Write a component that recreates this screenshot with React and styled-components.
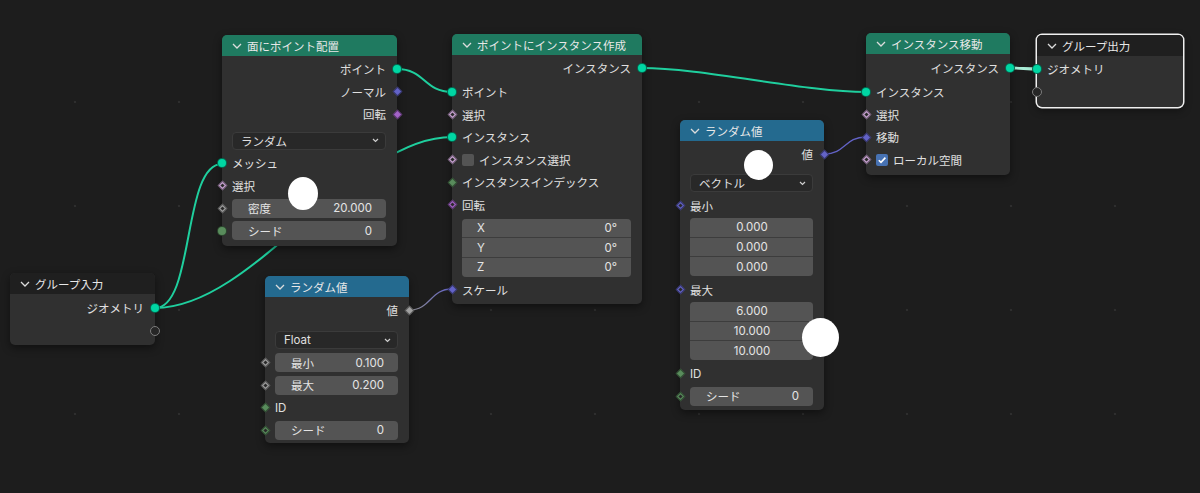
import React from 'react';
import styled, { createGlobalStyle, css } from 'styled-components';

const GlobalStyle = createGlobalStyle`
  body {
    margin: 0;
    background: #1d1d1d;
    font-family: Inter, "Noto Sans CJK JP", "Noto Sans", sans-serif;
  }
`;

const Canvas = styled.div`
  position: relative;
  width: 1200px;
  height: 493px;
  overflow: hidden;
  background-color: #1d1d1d;
  background-image: radial-gradient(circle, #2e2e2e 1px, transparent 1.6px);
  background-size: 104px 104px;
  background-position: 23px 50px;
`;

const Wires = styled.svg`
  position: absolute;
  left: 0;
  top: 0;
`;

const Node = styled.div`
  position: absolute;
  left: ${p => p.$x}px;
  top: ${p => p.$y}px;
  width: ${p => p.$w}px;
  background: #303030;
  border-radius: 5px;
  box-shadow: 0 3px 8px rgba(0, 0, 0, 0.45);
  ${p => p.$selected && css`
    box-shadow: 0 0 0 1.5px #f0f0f0, 0 3px 8px rgba(0, 0, 0, 0.45);
  `}
`;

const Header = styled.div`
  height: 21px;
  display: flex;
  align-items: center;
  gap: 5px;
  padding-left: 10px;
  background: ${p => p.$color};
  border-radius: 5px 5px 0 0;
  color: #e8e8e8;
  font-size: 11.5px;
  white-space: nowrap;
`;

const Body = styled.div`
  display: flex;
  flex-direction: column;
  padding: ${p => p.$pt}px 0 ${p => p.$pb}px;
`;

const Row = styled.div`
  position: relative;
  height: 22.5px;
  flex: none;
  display: flex;
  align-items: center;
  justify-content: ${p => (p.$out ? 'flex-end' : 'flex-start')};
  padding: 0 11px 0 10px;
  margin-top: ${p => p.$mt || 0}px;
  color: #e0e0e0;
  font-size: 11.5px;
  white-space: nowrap;
`;

const Circle = styled.span`
  position: absolute;
  top: 50%;
  ${p => p.$side}: -5px;
  width: 10px;
  height: 10px;
  margin-top: -5px;
  box-sizing: border-box;
  border-radius: 50%;
  background: ${p => (p.$hollow ? '#262626' : p.$color)};
  border: 1px solid ${p => (p.$hollow ? '#7c7c7c' : 'rgba(0,0,0,0.5)')};
`;

const Diamond = styled.span`
  position: absolute;
  top: 50%;
  ${p => p.$side}: -3.5px;
  width: 7px;
  height: 7px;
  margin-top: -3.5px;
  box-sizing: border-box;
  transform: rotate(45deg);
  background: ${p => p.$color};
  border: 1px solid rgba(0, 0, 0, 0.45);
  &::after {
    content: '';
    display: ${p => (p.$dot ? 'block' : 'none')};
    position: absolute;
    left: 50%;
    top: 50%;
    width: 2.4px;
    height: 2.4px;
    margin: -1.2px 0 0 -1.2px;
    background: #2a2a2a;
  }
`;

const SOCKETS = {
  geo: { shape: 'circle', color: '#00d6a3' },
  hollow: { shape: 'circle', hollow: true },
  intc: { shape: 'circle', color: '#598c5c' },
  vec: { shape: 'diamond', color: '#6363c7' },
  vecf: { shape: 'diamond', color: '#6363c7', dot: true },
  rot: { shape: 'diamond', color: '#a363c7' },
  rotf: { shape: 'diamond', color: '#a363c7', dot: true },
  boolf: { shape: 'diamond', color: '#cca6d6', dot: true },
  float: { shape: 'diamond', color: '#a1a1a1' },
  floatf: { shape: 'diamond', color: '#a1a1a1', dot: true },
  int: { shape: 'diamond', color: '#598c5c' },
  intf: { shape: 'diamond', color: '#598c5c', dot: true },
};

const Sock = ({ k, side = 'left' }) => {
  const s = SOCKETS[k];
  return s.shape === 'circle'
    ? <Circle $side={side} $color={s.color} $hollow={s.hollow} />
    : <Diamond $side={side} $color={s.color} $dot={s.dot} />;
};

const Field = styled.div`
  flex: 1;
  height: 19px;
  display: flex;
  align-items: center;
  justify-content: space-between;
  padding: 0 14px 0 16px;
  background: #545454;
  border-radius: 4px;
  color: #e4e4e4;
`;

const Vector = styled.div`
  display: flex;
  flex-direction: column;
  gap: 1px;
  margin: ${p => p.$mt || 0}px 11px 0 10px;
  border-radius: 4px;
  overflow: hidden;
  background: #3d3d3d;
`;

const VecCell = styled.div`
  height: 18.7px;
  display: flex;
  align-items: center;
  justify-content: ${p => (p.$center ? 'center' : 'space-between')};
  padding: 0 14px 0 15px;
  background: #545454;
  color: #e4e4e4;
  font-size: 11.5px;
`;

const Select = styled.div`
  flex: 1;
  height: 18px;
  box-sizing: border-box;
  display: flex;
  align-items: center;
  justify-content: space-between;
  padding: 0 6px 0 8px;
  background: #282828;
  border: 1px solid #3b3b3b;
  border-radius: 4px;
  color: #e0e0e0;
`;

const Check = styled.span`
  width: 12px;
  height: 12px;
  margin-right: 5px;
  border-radius: 2px;
  display: flex;
  align-items: center;
  justify-content: center;
  background: ${p => (p.$on ? '#4772b3' : '#545454')};
`;

const Blob = styled.span`
  position: absolute;
  left: ${p => p.$x - p.$w / 2}px;
  top: ${p => p.$y - p.$h / 2}px;
  width: ${p => p.$w}px;
  height: ${p => p.$h}px;
  border-radius: 50%;
  background: #ffffff;
`;

const Chevron = () => (
  <svg width="10" height="10" viewBox="0 0 10 10">
    <polyline points="1,3 5,7 9,3" fill="none" stroke="#dcdcdc" strokeWidth="1.3" />
  </svg>
);

const SmallChevron = () => (
  <svg width="7" height="5" viewBox="0 0 7 5">
    <polyline points="1,1 3.5,3.5 6,1" fill="none" stroke="#cfcfcf" strokeWidth="1.2" />
  </svg>
);

const Tick = () => (
  <svg width="10" height="10" viewBox="0 0 10 10">
    <polyline points="1.8,5.2 4,7.4 8.4,2.6" fill="none" stroke="#fff" strokeWidth="1.6" />
  </svg>
);

const GREEN = '#1f7a60';
const BLUE = '#246a8f';
const DARK = '#1f1f1f';

const wire = (x1, y1, x2, y2, d) =>
  `M${x1} ${y1} C${x1 + d} ${y1}, ${x2 - d} ${y2}, ${x2} ${y2}`;

const LINKS = [
  { d: wire(155, 308, 222, 164, 40), c: '#1fcf9e', w: 2 },
  { d: wire(155, 308, 452, 137, 100), c: '#1fcf9e', w: 2 },
  { d: wire(397, 69, 452, 92, 28), c: '#1fcf9e', w: 2 },
  { d: wire(642, 68, 866, 92, 60), c: '#1fcf9e', w: 2 },
  { d: wire(409, 310, 452, 289, 22), c: 'url(#floatVec)', w: 1.3 },
  { d: wire(824, 154, 866, 137, 22), c: '#6363c7', w: 1.3 },
  { d: wire(1010, 68, 1037, 69, 10), c: '#a8ecd6', w: 2.8 },
];

export default function App() {
  return (
    <>
      <GlobalStyle />
      <Canvas>
        <Wires width="1200" height="493">
          <defs>
            <linearGradient id="floatVec" gradientUnits="userSpaceOnUse" x1="409" y1="0" x2="452" y2="0">
              <stop offset="0" stopColor="#8d8d8d" />
              <stop offset="1" stopColor="#6363c7" />
            </linearGradient>
          </defs>
          {LINKS.map((l, i) => (
            <path key={i} d={l.d} fill="none" stroke={l.c} strokeWidth={l.w} strokeLinecap="round" />
          ))}
        </Wires>

        <Node $x={10} $y={273} $w={145}>
          <Header $color={DARK}><Chevron />グループ入力</Header>
          <Body $pt={3} $pb={3}>
            <Row $out>ジオメトリ<Sock k="geo" side="right" /></Row>
            <Row $out><Sock k="hollow" side="right" /></Row>
          </Body>
        </Node>

        <Node $x={222} $y={35} $w={175}>
          <Header $color={GREEN}><Chevron />面にポイント配置</Header>
          <Body $pt={2} $pb={4}>
            <Row $out>ポイント<Sock k="geo" side="right" /></Row>
            <Row $out>ノーマル<Sock k="vec" side="right" /></Row>
            <Row $out>回転<Sock k="rot" side="right" /></Row>
            <Row $mt={4}><Select>ランダム<SmallChevron /></Select></Row>
            <Row><Sock k="geo" />メッシュ</Row>
            <Row><Sock k="boolf" />選択</Row>
            <Row><Sock k="floatf" /><Field><span>密度</span><span>20.000</span></Field></Row>
            <Row><Sock k="intc" /><Field><span>シード</span><span>0</span></Field></Row>
          </Body>
        </Node>

        <Node $x={452} $y={34} $w={190}>
          <Header $color={GREEN}><Chevron />ポイントにインスタンス作成</Header>
          <Body $pt={2} $pb={3}>
            <Row $out>インスタンス<Sock k="geo" side="right" /></Row>
            <Row $mt={1.5}><Sock k="geo" />ポイント</Row>
            <Row><Sock k="boolf" />選択</Row>
            <Row><Sock k="geo" />インスタンス</Row>
            <Row><Sock k="boolf" /><Check />インスタンス選択</Row>
            <Row><Sock k="int" />インスタンスインデックス</Row>
            <Row><Sock k="rotf" />回転</Row>
            <Vector $mt={2.5}>
              <VecCell><span>X</span><span>0°</span></VecCell>
              <VecCell><span>Y</span><span>0°</span></VecCell>
              <VecCell><span>Z</span><span>0°</span></VecCell>
            </Vector>
            <Row $mt={2}><Sock k="vec" />スケール</Row>
          </Body>
        </Node>

        <Node $x={265} $y={276} $w={144}>
          <Header $color={BLUE}><Chevron />ランダム値</Header>
          <Body $pt={2} $pb={1.5}>
            <Row $out>値<Sock k="float" side="right" /></Row>
            <Row $mt={7.5}><Select>Float<SmallChevron /></Select></Row>
            <Row><Sock k="floatf" /><Field><span>最小</span><span>0.100</span></Field></Row>
            <Row><Sock k="floatf" /><Field><span>最大</span><span>0.200</span></Field></Row>
            <Row><Sock k="int" />ID</Row>
            <Row><Sock k="intf" /><Field><span>シード</span><span>0</span></Field></Row>
          </Body>
        </Node>

        <Node $x={680} $y={120} $w={144}>
          <Header $color={BLUE}><Chevron />ランダム値</Header>
          <Body $pt={2} $pb={2.5}>
            <Row $out>値<Sock k="vec" side="right" /></Row>
            <Row $mt={6.5}><Select>ベクトル<SmallChevron /></Select></Row>
            <Row><Sock k="vecf" />最小</Row>
            <Vector $mt={1}>
              <VecCell $center>0.000</VecCell>
              <VecCell $center>0.000</VecCell>
              <VecCell $center>0.000</VecCell>
            </Vector>
            <Row $mt={2.5}><Sock k="vecf" />最大</Row>
            <Vector $mt={1}>
              <VecCell $center>6.000</VecCell>
              <VecCell $center>10.000</VecCell>
              <VecCell $center>10.000</VecCell>
            </Vector>
            <Row $mt={2.5}><Sock k="int" />ID</Row>
            <Row><Sock k="intf" /><Field><span>シード</span><span>0</span></Field></Row>
          </Body>
        </Node>

        <Node $x={866} $y={33} $w={144}>
          <Header $color={GREEN}><Chevron />インスタンス移動</Header>
          <Body $pt={3} $pb={4}>
            <Row $out>インスタンス<Sock k="geo" side="right" /></Row>
            <Row $mt={1.5}><Sock k="geo" />インスタンス</Row>
            <Row><Sock k="boolf" />選択</Row>
            <Row><Sock k="vec" />移動</Row>
            <Row><Sock k="boolf" /><Check $on><Tick /></Check>ローカル空間</Row>
          </Body>
        </Node>

        <Node $x={1037} $y={35} $w={146} $selected>
          <Header $color={DARK}><Chevron />グループ出力</Header>
          <Body $pt={2} $pb={4}>
            <Row><Sock k="geo" />ジオメトリ</Row>
            <Row><Sock k="hollow" /></Row>
          </Body>
        </Node>

        <Blob $x={303} $y={193} $w={30} $h={33} />
        <Blob $x={758} $y={165} $w={29} $h={30} />
        <Blob $x={820} $y={337} $w={37} $h={39} />
      </Canvas>
    </>
  );
}
